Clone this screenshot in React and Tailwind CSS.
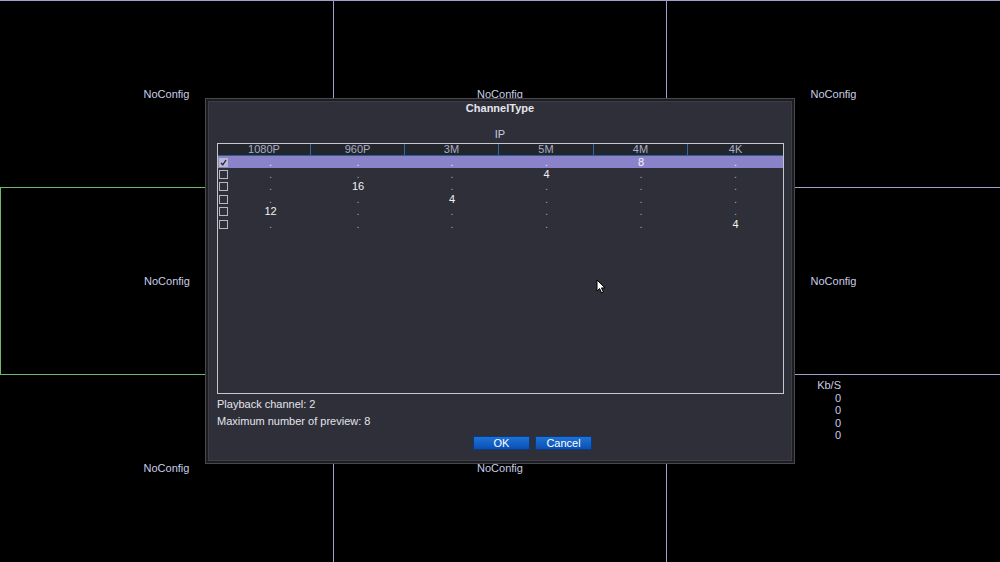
import React from "react";

const font = { fontFamily: '"Liberation Sans", Arial, sans-serif' };

function Cell({ label, cls, children }) {
  return (
    <div className={"relative flex items-center justify-center " + cls}>
      {label && <span className="text-[11px] leading-[13px] text-[#c9cce6]">{label}</span>}
      {children}
    </div>
  );
}

const headers = ["1080P", "960P", "3M", "5M", "4M", "4K"];
const rows = [
  [".", ".", ".", ".", "8", "."],
  [".", ".", ".", "4", ".", "."],
  [".", "16", ".", ".", ".", "."],
  [".", ".", "4", ".", ".", "."],
  ["12", ".", ".", ".", ".", "."],
  [".", ".", ".", ".", ".", "4"],
];

function Checkbox({ checked }) {
  return (
    <div className={"w-[9px] h-[9px] border border-[#b8b8c4] flex items-center justify-center " + (checked ? "bg-[#b9b6de]" : "")}>
      {checked && (
        <svg width="7" height="7" viewBox="0 0 7 7">
          <path d="M1 4 L2.8 5.8 L6 1" stroke="#202028" strokeWidth="1.3" fill="none" />
        </svg>
      )}
    </div>
  );
}

export default function App() {
  return (
    <div className="relative w-[1000px] h-[562px] bg-black overflow-hidden" style={font}>
      <div className="grid grid-cols-[333px_333px_334px] grid-rows-[187px_187px_188px] w-full h-full">
        <Cell label="NoConfig" cls="border-t border-[#a69ccf]" />
        <Cell label="NoConfig" cls="border-t border-l border-[#a69ccf]" />
        <Cell label="NoConfig" cls="border-t border-l border-[#a69ccf]" />
        <Cell label="NoConfig" cls="border-t border-l border-[#6fb86f]" />
        <Cell label="NoConfig" cls="border-t border-l border-[#a69ccf]" />
        <Cell label="NoConfig" cls="border-t border-l border-[#a69ccf]" />
        <Cell label="NoConfig" cls="border-t border-[#6fb86f]" />
        <Cell label="NoConfig" cls="border-t border-l border-[#a69ccf]" />
        <div className="border-t border-l border-[#a69ccf] pt-[4px] pl-[140px]">
          <div className="w-[34px] text-right text-[11px] leading-[12.5px] text-[#c9cce6]">
            <div>Kb/S</div>
            <div>0</div>
            <div>0</div>
            <div>0</div>
            <div>0</div>
          </div>
        </div>
      </div>

      {/* Dialog */}
      <div className="absolute left-[205px] top-[98px] w-[590px] h-[366px] border border-[#48484e] bg-[#1c1c21] p-[2px]">
        <div className="h-full border border-[#3e3f46] bg-[#2e2f38] flex flex-col">
          <div className="h-[13px] leading-[13px] text-center text-[11px] font-bold text-[#e6e6ee]">ChannelType</div>
          <div className="h-[13px] leading-[13px] text-center text-[11px] text-[#c9cce6] mt-[13px]">IP</div>
          <div className="ml-[8px] mt-[2px] w-[567px] h-[251px] border border-[#c6c6cc] bg-[#2e2f38] flex flex-col">
            <div className="grid grid-cols-[93px_94px_94px_95px_94px_95px] h-[12px] bg-[#23252d] border-b border-[#2d5f8f]">
              {headers.map((h, i) => (
                <div
                  key={h}
                  className={"text-center text-[11px] leading-[11px] text-[#a9adc2] border-[#2f6aa3] " + (i < 5 ? "border-r" : "")}
                >
                  {h}
                </div>
              ))}
            </div>
            {rows.map((r, ri) => (
              <div
                key={ri}
                className={"grid grid-cols-[12px_81px_94px_94px_95px_94px_95px] h-[12.4px] items-center " + (ri === 0 ? "bg-[#8b83c9]" : "")}
              >
                <div className="pl-[1px] flex items-center">
                  <Checkbox checked={ri === 0} />
                </div>
                {r.map((v, ci) => (
                  <div
                    key={ci}
                    className={"text-center text-[11px] leading-[11px] " + (v === "." ? (ri === 0 ? "text-[#e8e8f4]" : "text-[#a0a2b4]") : "text-[#f2f2f6]")}
                  >
                    {v}
                  </div>
                ))}
              </div>
            ))}
          </div>
          <div className="ml-[8px] mt-[4px] h-[12px] leading-[12px] text-[11px] text-[#e4e4ec]">Playback channel: 2</div>
          <div className="ml-[8px] mt-[5px] h-[12px] leading-[12px] text-[11px] text-[#e4e4ec]">Maximum number of preview: 8</div>
          <div className="mt-[9px] flex gap-[5px] pl-[264px]">
            <div className="w-[57px] h-[14px] border border-[#0a3a7a] bg-gradient-to-b from-[#1f72d6] to-[#0b50b4] text-center text-[11px] leading-[12px] text-white">OK</div>
            <div className="w-[57px] h-[14px] border border-[#0a3a7a] bg-gradient-to-b from-[#1f72d6] to-[#0b50b4] text-center text-[11px] leading-[12px] text-white">Cancel</div>
          </div>
        </div>
      </div>

      {/* Cursor */}
      <svg className="absolute left-[596px] top-[279px]" width="12" height="16" viewBox="0 0 12 16">
        <path d="M1 1 L1 12 L3.6 9.6 L5.6 14 L7.4 13.2 L5.5 8.9 L9 8.9 Z" fill="#ffffff" stroke="#000000" strokeWidth="1" strokeLinejoin="round" />
      </svg>
    </div>
  );
}
